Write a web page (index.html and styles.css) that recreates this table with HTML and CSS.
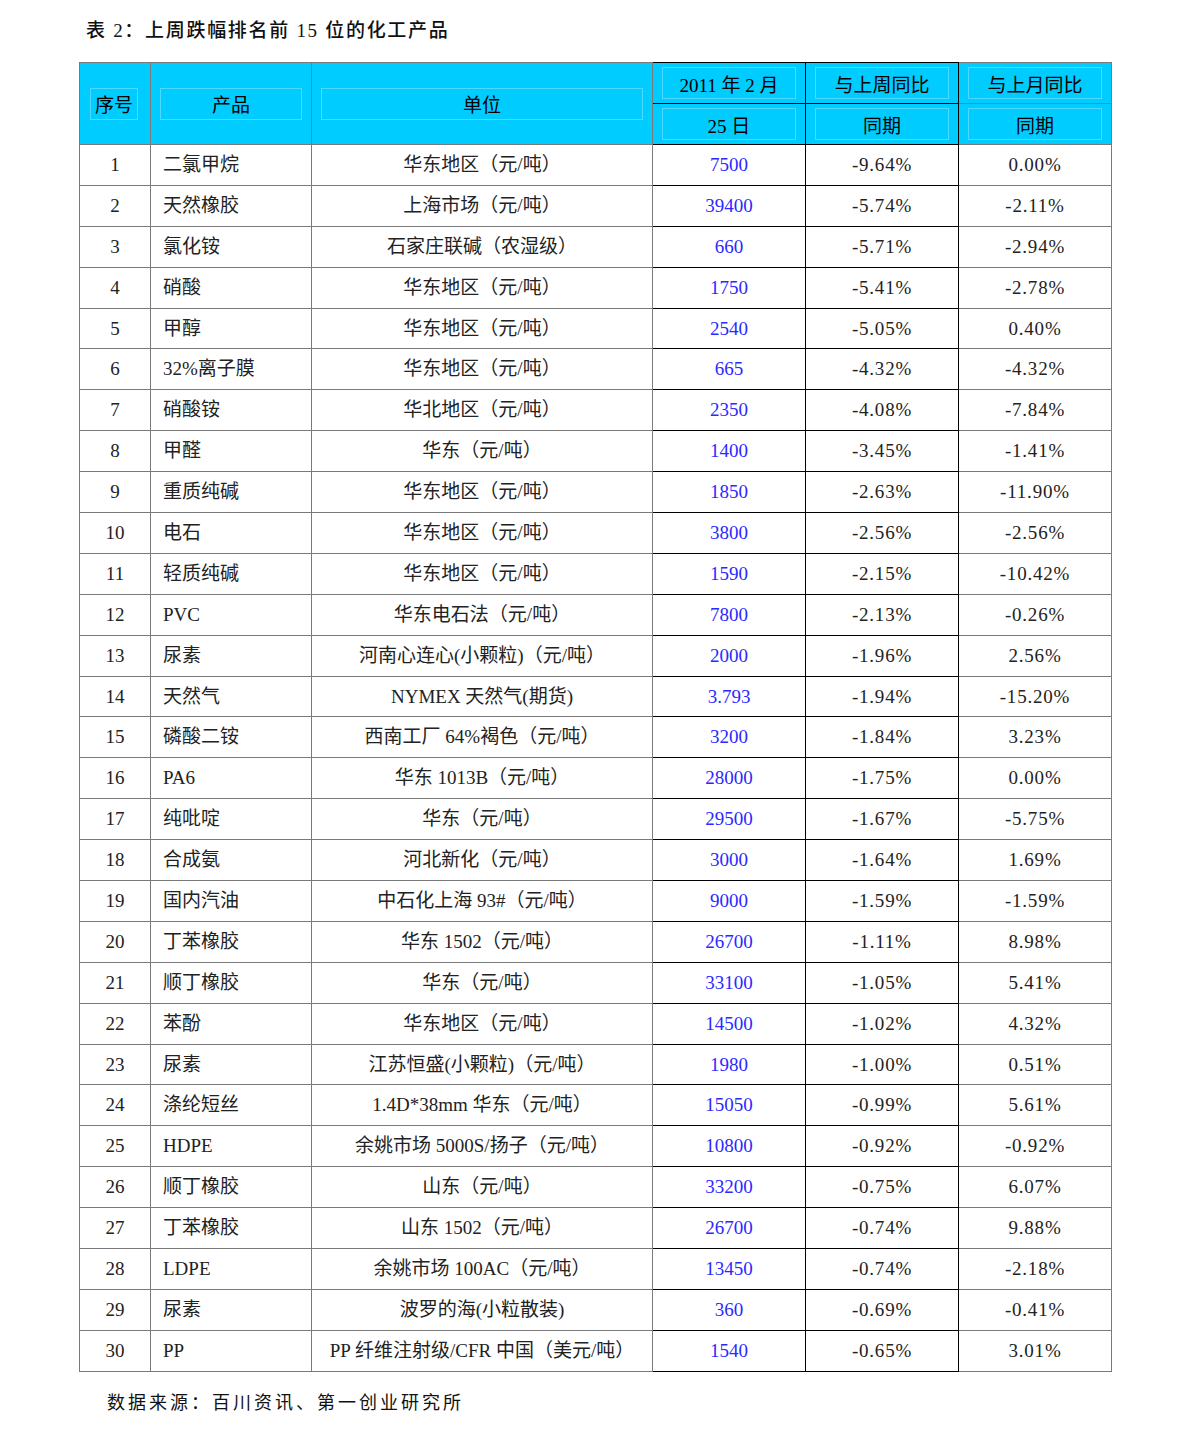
FILE: index.html
```html
<!DOCTYPE html>
<html lang="zh">
<head>
<meta charset="utf-8">
<title>表2</title>
<link rel="stylesheet" href="styles.css">
</head>
<body>
<div class="page">
  <h1 class="title">表 2：上周跌幅排名前 15 位的化工产品</h1>
  <table class="data">
    <colgroup>
      <col class="c-no"><col class="c-prod"><col class="c-unit"><col class="c-price"><col class="c-wk"><col class="c-mo">
    </colgroup>
    <thead>
      <tr>
        <th rowspan="2" class="hd"><span class="box tall">序号</span></th>
        <th rowspan="2" class="hd"><span class="box tall">产品</span></th>
        <th rowspan="2" class="hd"><span class="box tall">单位</span></th>
        <th class="hd b-dark"><span class="box">2011 年 2 月</span></th>
        <th class="hd b-dark"><span class="box">与上周同比</span></th>
        <th class="hd"><span class="box">与上月同比</span></th>
      </tr>
      <tr>
        <th class="hd b-dark"><span class="box">25 日</span></th>
        <th class="hd b-dark"><span class="box">同期</span></th>
        <th class="hd"><span class="box">同期</span></th>
      </tr>
    </thead>
    <tbody>
      <tr><td>1</td><td class="prod">二氯甲烷</td><td>华东地区（元/吨）</td><td class="price b-dark">7500</td><td class="pct b-dark">-9.64%</td><td class="pct">0.00%</td></tr>
      <tr><td>2</td><td class="prod">天然橡胶</td><td>上海市场（元/吨）</td><td class="price b-dark">39400</td><td class="pct b-dark">-5.74%</td><td class="pct">-2.11%</td></tr>
      <tr><td>3</td><td class="prod">氯化铵</td><td>石家庄联碱（农湿级）</td><td class="price b-dark">660</td><td class="pct b-dark">-5.71%</td><td class="pct">-2.94%</td></tr>
      <tr><td>4</td><td class="prod">硝酸</td><td>华东地区（元/吨）</td><td class="price b-dark">1750</td><td class="pct b-dark">-5.41%</td><td class="pct">-2.78%</td></tr>
      <tr><td>5</td><td class="prod">甲醇</td><td>华东地区（元/吨）</td><td class="price b-dark">2540</td><td class="pct b-dark">-5.05%</td><td class="pct">0.40%</td></tr>
      <tr><td>6</td><td class="prod">32%离子膜</td><td>华东地区（元/吨）</td><td class="price b-dark">665</td><td class="pct b-dark">-4.32%</td><td class="pct">-4.32%</td></tr>
      <tr><td>7</td><td class="prod">硝酸铵</td><td>华北地区（元/吨）</td><td class="price b-dark">2350</td><td class="pct b-dark">-4.08%</td><td class="pct">-7.84%</td></tr>
      <tr><td>8</td><td class="prod">甲醛</td><td>华东（元/吨）</td><td class="price b-dark">1400</td><td class="pct b-dark">-3.45%</td><td class="pct">-1.41%</td></tr>
      <tr><td>9</td><td class="prod">重质纯碱</td><td>华东地区（元/吨）</td><td class="price b-dark">1850</td><td class="pct b-dark">-2.63%</td><td class="pct">-11.90%</td></tr>
      <tr><td>10</td><td class="prod">电石</td><td>华东地区（元/吨）</td><td class="price b-dark">3800</td><td class="pct b-dark">-2.56%</td><td class="pct">-2.56%</td></tr>
      <tr><td>11</td><td class="prod">轻质纯碱</td><td>华东地区（元/吨）</td><td class="price b-dark">1590</td><td class="pct b-dark">-2.15%</td><td class="pct">-10.42%</td></tr>
      <tr><td>12</td><td class="prod">PVC</td><td>华东电石法（元/吨）</td><td class="price b-dark">7800</td><td class="pct b-dark">-2.13%</td><td class="pct">-0.26%</td></tr>
      <tr><td>13</td><td class="prod">尿素</td><td>河南心连心(小颗粒)（元/吨）</td><td class="price b-dark">2000</td><td class="pct b-dark">-1.96%</td><td class="pct">2.56%</td></tr>
      <tr><td>14</td><td class="prod">天然气</td><td>NYMEX 天然气(期货)</td><td class="price b-dark">3.793</td><td class="pct b-dark">-1.94%</td><td class="pct">-15.20%</td></tr>
      <tr><td>15</td><td class="prod">磷酸二铵</td><td>西南工厂 64%褐色（元/吨）</td><td class="price b-dark">3200</td><td class="pct b-dark">-1.84%</td><td class="pct">3.23%</td></tr>
      <tr><td>16</td><td class="prod">PA6</td><td>华东 1013B（元/吨）</td><td class="price b-dark">28000</td><td class="pct b-dark">-1.75%</td><td class="pct">0.00%</td></tr>
      <tr><td>17</td><td class="prod">纯吡啶</td><td>华东（元/吨）</td><td class="price b-dark">29500</td><td class="pct b-dark">-1.67%</td><td class="pct">-5.75%</td></tr>
      <tr><td>18</td><td class="prod">合成氨</td><td>河北新化（元/吨）</td><td class="price b-dark">3000</td><td class="pct b-dark">-1.64%</td><td class="pct">1.69%</td></tr>
      <tr><td>19</td><td class="prod">国内汽油</td><td>中石化上海 93#（元/吨）</td><td class="price b-dark">9000</td><td class="pct b-dark">-1.59%</td><td class="pct">-1.59%</td></tr>
      <tr><td>20</td><td class="prod">丁苯橡胶</td><td>华东 1502（元/吨）</td><td class="price b-dark">26700</td><td class="pct b-dark">-1.11%</td><td class="pct">8.98%</td></tr>
      <tr><td>21</td><td class="prod">顺丁橡胶</td><td>华东（元/吨）</td><td class="price b-dark">33100</td><td class="pct b-dark">-1.05%</td><td class="pct">5.41%</td></tr>
      <tr><td>22</td><td class="prod">苯酚</td><td>华东地区（元/吨）</td><td class="price b-dark">14500</td><td class="pct b-dark">-1.02%</td><td class="pct">4.32%</td></tr>
      <tr><td>23</td><td class="prod">尿素</td><td>江苏恒盛(小颗粒)（元/吨）</td><td class="price b-dark">1980</td><td class="pct b-dark">-1.00%</td><td class="pct">0.51%</td></tr>
      <tr><td>24</td><td class="prod">涤纶短丝</td><td>1.4D*38mm 华东（元/吨）</td><td class="price b-dark">15050</td><td class="pct b-dark">-0.99%</td><td class="pct">5.61%</td></tr>
      <tr><td>25</td><td class="prod">HDPE</td><td>余姚市场 5000S/扬子（元/吨）</td><td class="price b-dark">10800</td><td class="pct b-dark">-0.92%</td><td class="pct">-0.92%</td></tr>
      <tr><td>26</td><td class="prod">顺丁橡胶</td><td>山东（元/吨）</td><td class="price b-dark">33200</td><td class="pct b-dark">-0.75%</td><td class="pct">6.07%</td></tr>
      <tr><td>27</td><td class="prod">丁苯橡胶</td><td>山东 1502（元/吨）</td><td class="price b-dark">26700</td><td class="pct b-dark">-0.74%</td><td class="pct">9.88%</td></tr>
      <tr><td>28</td><td class="prod">LDPE</td><td>余姚市场 100AC（元/吨）</td><td class="price b-dark">13450</td><td class="pct b-dark">-0.74%</td><td class="pct">-2.18%</td></tr>
      <tr><td>29</td><td class="prod">尿素</td><td>波罗的海(小粒散装)</td><td class="price b-dark">360</td><td class="pct b-dark">-0.69%</td><td class="pct">-0.41%</td></tr>
      <tr><td>30</td><td class="prod">PP</td><td>PP 纤维注射级/CFR 中国（美元/吨）</td><td class="price b-dark">1540</td><td class="pct b-dark">-0.65%</td><td class="pct">3.01%</td></tr>
    </tbody>
  </table>
  <p class="source">数据来源：百川资讯、第一创业研究所</p>
</div>
</body>
</html>
```

FILE: styles.css
```css
html, body {
  margin: 0;
  padding: 0;
  background: #ffffff;
}

.page {
  padding: 20px 0 0 79px;
  font-family: "Liberation Serif", "Noto Sans CJK SC", serif;
  color: #111;
}

.title {
  margin: 0 0 20px 7px;
  font-size: 19px;
  font-weight: 500;
  line-height: 22px;
  letter-spacing: 1.7px;
}

.data {
  border-collapse: collapse;
  table-layout: fixed;
  width: 1033px;
  font-size: 19px;
  border-left: 1px solid #000;
  border-top: 1px solid #000;
}

.c-no { width: 71px; }
.c-prod { width: 161px; }
.c-unit { width: 341px; }
.c-price { width: 153px; }
.c-wk { width: 153px; }
.c-mo { width: 153px; }

.data th,
.data td {
  border: 1px solid #7a7a7a;
  padding: 0;
  text-align: center;
  vertical-align: middle;
}

.data th.b-dark,
.data td.b-dark {
  border-color: #000;
}

.data thead tr {
  height: 41px;
}

.data tbody tr {
  height: 40.9px;
}

.data td {
  line-height: 22px;
  color: #222;
}

.data td.prod {
  text-align: left;
  padding-left: 12px;
}

.data td.price {
  color: #2a2aff;
}

.data td.pct {
  letter-spacing: 0.8px;
}

.hd {
  background: #00ccff;
  font-weight: normal;
  color: #000;
}

.box {
  display: flex;
  align-items: center;
  justify-content: center;
  height: 32px;
  margin: 0 9px;
  border: 1px solid #4ddaff;
  box-sizing: border-box;
  white-space: nowrap;
}

.data thead tr:first-child th:first-child .box {
  margin: 0 12px 0 10px;
}

.source {
  margin: 20px 0 0 28px;
  font-size: 18px;
  line-height: 22px;
  letter-spacing: 3px;
  color: #111;
}
```
